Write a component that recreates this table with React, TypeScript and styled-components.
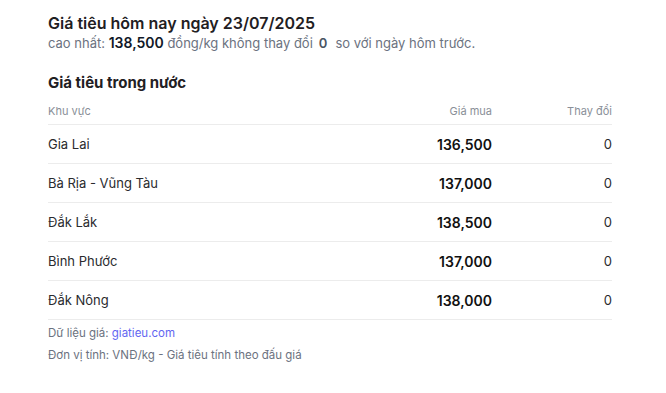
import styled, { createGlobalStyle } from "styled-components";

const GlobalStyle = createGlobalStyle`
  body {
    margin: 0;
    background: #ffffff;
    font-family: Inter, "Noto Sans", sans-serif;
    color: #111827;
  }
`;

interface IPrice {
  region: string;
  price: string;
  change: string;
}

const prices: IPrice[] = [
  { region: "Gia Lai", price: "136,500", change: "0" },
  { region: "Bà Rịa - Vũng Tàu", price: "137,000", change: "0" },
  { region: "Đắk Lắk", price: "138,500", change: "0" },
  { region: "Bình Phước", price: "137,000", change: "0" },
  { region: "Đắk Nông", price: "138,000", change: "0" },
];

const Wrapper = styled.div`
  width: 564px;
  padding: 12px 0 0 48px;
`;

const Title = styled.h1`
  margin: 0;
  font-size: 16px;
  line-height: 22px;
  font-weight: 600;
  color: #1f2023;
`;

const Summary = styled.p`
  margin: 0;
  font-size: 13px;
  line-height: 18px;
  color: #6b7280;
`;

const Strong = styled.span`
  font-weight: 600;
  font-size: 14px;
  color: #111827;
`;

const Zero = styled.span`
  font-weight: 600;
  color: #4b5563;
  margin: 0 8px 0 6px;
`;

const Heading = styled.h2`
  margin: 21px 0 0;
  font-size: 15px;
  line-height: 20px;
  font-weight: 700;
  color: #1f2023;
`;

const Row = styled.div<{ $head?: boolean }>`
  box-sizing: border-box;
  display: grid;
  grid-template-columns: 1fr 120px 120px;
  align-items: center;
  height: ${(p) => (p.$head ? "32px" : "39px")};
  padding-top: ${(p) => (p.$head ? "4px" : "0")};
  border-bottom: 1px solid #ececec;
  font-size: ${(p) => (p.$head ? "11px" : "13px")};
  color: ${(p) => (p.$head ? "#8a8f98" : "#2a2b2e")};
`;

const Cell = styled.div<{ $right?: boolean; $bold?: boolean }>`
  text-align: ${(p) => (p.$right ? "right" : "left")};
  font-weight: ${(p) => (p.$bold ? 600 : 400)};
  font-size: ${(p) => (p.$bold ? "14px" : "inherit")};
  color: ${(p) => (p.$bold ? "#111111" : "inherit")};
`;

const Notes = styled.div`
  padding-top: 2px;
`;

const Note = styled.p`
  margin: 0;
  font-size: 11.5px;
  line-height: 22px;
  color: #6b7280;
`;

const Link = styled.a`
  color: #6366f1;
  text-decoration: none;
`;

export default function App() {
  return (
    <>
      <GlobalStyle />
      <Wrapper>
        <Title>Giá tiêu hôm nay ngày 23/07/2025</Title>
        <Summary>
          cao nhất: <Strong>138,500</Strong> đồng/kg không thay đổi
          <Zero>0</Zero>so với ngày hôm trước.
        </Summary>
        <Heading>Giá tiêu trong nước</Heading>
        <Row $head>
          <Cell>Khu vực</Cell>
          <Cell $right>Giá mua</Cell>
          <Cell $right>Thay đổi</Cell>
        </Row>
        {prices.map((p) => (
          <Row key={p.region}>
            <Cell>{p.region}</Cell>
            <Cell $right $bold>
              {p.price}
            </Cell>
            <Cell $right>{p.change}</Cell>
          </Row>
        ))}
        <Notes>
          <Note>
            Dữ liệu giá: <Link href="#">giatieu.com</Link>
          </Note>
          <Note>Đơn vị tính: VNĐ/kg - Giá tiêu tính theo đấu giá</Note>
        </Notes>
      </Wrapper>
    </>
  );
}
